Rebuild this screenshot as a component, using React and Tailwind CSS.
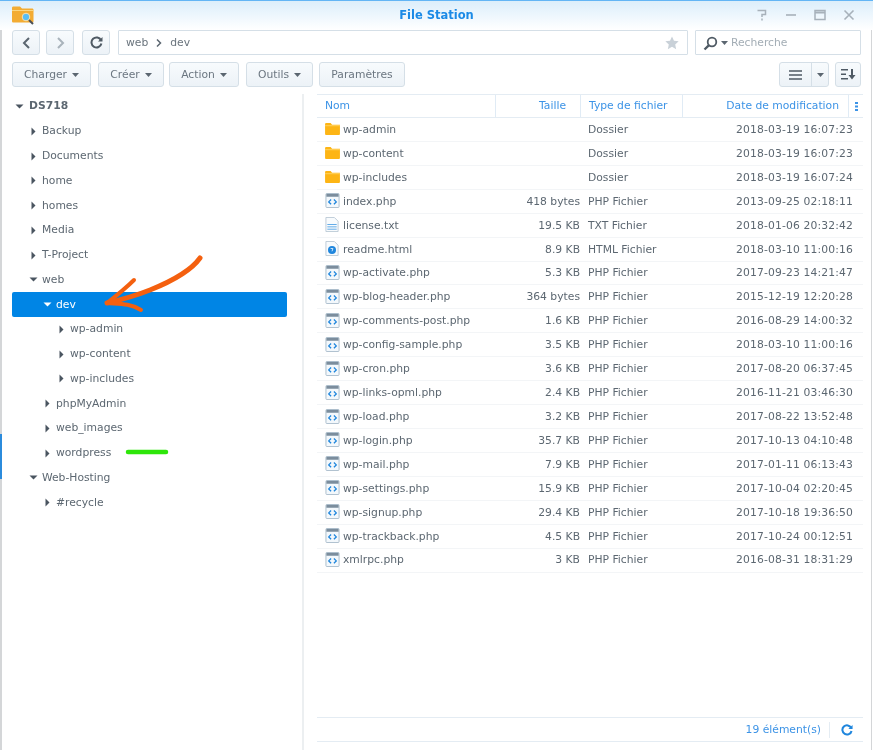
import React from "react";

const tree = [
  { t: "Backup", d: 1, o: 0 }, { t: "Documents", d: 1, o: 0 }, { t: "home", d: 1, o: 0 }, { t: "homes", d: 1, o: 0 },
  { t: "Media", d: 1, o: 0 }, { t: "T-Project", d: 1, o: 0 }, { t: "web", d: 1, o: 1 }, { t: "dev", d: 2, o: 1, sel: 1 },
  { t: "wp-admin", d: 3, o: 0 }, { t: "wp-content", d: 3, o: 0 }, { t: "wp-includes", d: 3, o: 0 },
  { t: "phpMyAdmin", d: 2, o: 0 }, { t: "web_images", d: 2, o: 0 }, { t: "wordpress", d: 2, o: 0 },
  { t: "Web-Hosting", d: 1, o: 1 }, { t: "#recycle", d: 2, o: 0 },
];

const files = [
  ["wp-admin", "", "Dossier", "2018-03-19 16:07:23", "f"],
  ["wp-content", "", "Dossier", "2018-03-19 16:07:23", "f"],
  ["wp-includes", "", "Dossier", "2018-03-19 16:07:24", "f"],
  ["index.php", "418 bytes", "PHP Fichier", "2013-09-25 02:18:11", "p"],
  ["license.txt", "19.5 KB", "TXT Fichier", "2018-01-06 20:32:42", "t"],
  ["readme.html", "8.9 KB", "HTML Fichier", "2018-03-10 11:00:16", "h"],
  ["wp-activate.php", "5.3 KB", "PHP Fichier", "2017-09-23 14:21:47", "p"],
  ["wp-blog-header.php", "364 bytes", "PHP Fichier", "2015-12-19 12:20:28", "p"],
  ["wp-comments-post.php", "1.6 KB", "PHP Fichier", "2016-08-29 14:00:32", "p"],
  ["wp-config-sample.php", "3.5 KB", "PHP Fichier", "2018-03-10 11:00:16", "p"],
  ["wp-cron.php", "3.6 KB", "PHP Fichier", "2017-08-20 06:37:45", "p"],
  ["wp-links-opml.php", "2.4 KB", "PHP Fichier", "2016-11-21 03:46:30", "p"],
  ["wp-load.php", "3.2 KB", "PHP Fichier", "2017-08-22 13:52:48", "p"],
  ["wp-login.php", "35.7 KB", "PHP Fichier", "2017-10-13 04:10:48", "p"],
  ["wp-mail.php", "7.9 KB", "PHP Fichier", "2017-01-11 06:13:43", "p"],
  ["wp-settings.php", "15.9 KB", "PHP Fichier", "2017-10-04 02:20:45", "p"],
  ["wp-signup.php", "29.4 KB", "PHP Fichier", "2017-10-18 19:36:50", "p"],
  ["wp-trackback.php", "4.5 KB", "PHP Fichier", "2017-10-24 00:12:51", "p"],
  ["xmlrpc.php", "3 KB", "PHP Fichier", "2016-08-31 18:31:29", "p"],
];

const Caret = ({ open, color = "#4a5560" }) => (
  <svg width="9" height="9" viewBox="0 0 9 9" className="shrink-0">
    {open ? <path d="M0.5 2.5H8.5L4.5 6.5Z" fill={color} /> : <path d="M2.5 0.5V8.5L6.5 4.5Z" fill={color} />}
  </svg>
);

const Down = () => (
  <svg width="7" height="4" viewBox="0 0 7 4" className="shrink-0"><path d="M0 0H7L3.5 4Z" fill="#5b6670" /></svg>
);

const FileIcon = ({ k }) => {
  if (k === "f")
    return (
      <svg width="15" height="13" viewBox="0 0 16 14" className="shrink-0">
        <path d="M0 2.5C0 1.5 .5 1 1.5 1H6L7.5 3H16V13C16 13.6 15.6 14 15 14H1C.4 14 0 13.6 0 13Z" fill="#fdb515" />
        <path d="M0 4H16" stroke="#ffd466" strokeWidth="1" />
      </svg>
    );
  if (k === "p")
    return (
      <svg width="15" height="15" viewBox="0 0 15 16" className="shrink-0">
        <rect x=".5" y=".5" width="14" height="15" rx="1" fill="#f3f8fc" stroke="#a9bccb" />
        <rect x="1" y="1" width="13" height="3" fill="#7b8d9d" />
        <path d="M6 7L3.5 9.5L6 12M9 7L11.5 9.5L9 12" fill="none" stroke="#1f86dd" strokeWidth="1.4" />
      </svg>
    );
  if (k === "t")
    return (
      <svg width="14" height="15" viewBox="0 0 14 16" className="shrink-0">
        <path d="M.5.5H9.5L13.5 4.5V15.5H.5Z" fill="#f8fbfd" stroke="#bccbd6" />
        <path d="M2 8H12M2 10.5H12M2 13H12" stroke="#5aa6e6" strokeWidth="1" />
      </svg>
    );
  return (
    <svg width="14" height="15" viewBox="0 0 14 16" className="shrink-0">
      <path d="M.5.5H9.5L13.5 4.5V15.5H.5Z" fill="#f8fbfd" stroke="#bccbd6" />
      <circle cx="7" cy="9.5" r="4.3" fill="#1f86dd" />
      <path d="M5.5 8H8L7 11" stroke="#d5ebfb" strokeWidth="1" fill="none" />
    </svg>
  );
};

const btn = "flex items-center justify-center rounded-[3px] border border-[#d5dfe7] bg-gradient-to-b from-[#f8fbfd] to-[#ecf2f7]";

const TextBtn = ({ label, w, caret = true }) => (
  <div className={`${btn} h-[25px] gap-[5px] pt-[1px] text-[#6b7680] ${w}`}>
    <span>{label}</span>
    {caret && <Down />}
  </div>
);

export default function App() {
  return (
    <div className="relative w-[873px] h-[750px] bg-white overflow-hidden text-[10.75px] text-[#5c6771] blur-[0.35px]" style={{ fontFamily: '"DejaVu Sans", sans-serif' }}>
      <div className="absolute left-0 top-0 bottom-0 w-[2px] bg-[#d4d6d8]" />
      <div className="absolute left-0 top-[434px] h-[45px] w-[2px] bg-[#2b8bdc]" />
      <div className="absolute right-[1px] top-0 bottom-0 w-[1px] bg-[#d4d6d8]" />

      {/* title bar */}
      <div className="relative h-[30px] border-t border-[#63b5f5] bg-gradient-to-b from-[#dceefb] to-white flex items-center justify-center">
        <span className="font-bold text-[#1b8ae6] text-[11.5px]">File Station</span>
        <svg className="absolute left-[12px] top-[5px]" width="22" height="19" viewBox="0 0 22 19">
          <path d="M0 2C0 1 .5.5 1.5.5H8L10 2.5H20C21 2.5 21.5 3 21.5 4V15C21.5 16 21 16.5 20 16.5H1.5C.5 16.5 0 16 0 15Z" fill="#f3ac33" />
          <path d="M0 4.5H21.5" stroke="#fbd680" strokeWidth="1" />
          <circle cx="14" cy="11" r="3.8" fill="#57bdf5" stroke="#f6e2b0" strokeWidth="1" />
          <path d="M17 14L21 18" stroke="#4a4f55" strokeWidth="2" />
        </svg>
        <div className="absolute right-[18px] top-[8px] flex items-center gap-[17px]">
          <svg width="12" height="12" viewBox="0 0 12 12" fill="none" stroke="#a7b1ba" strokeWidth="1.5"><path d="M1.5 1.5H9.5V5.5H6V8M6 9.5V11.5" /></svg>
          <svg width="12" height="12" viewBox="0 0 12 12" fill="none" stroke="#a7b1ba" strokeWidth="1.6"><path d="M1 6H11" /></svg>
          <svg width="12" height="12" viewBox="0 0 12 12" fill="none" stroke="#a7b1ba" strokeWidth="1.5"><rect x="1" y="1.5" width="10" height="9" /><path d="M1 3.5H11" strokeWidth="2" /></svg>
          <svg width="12" height="12" viewBox="0 0 12 12" fill="none" stroke="#a7b1ba" strokeWidth="1.6"><path d="M1.5 1.5L10.5 10.5M10.5 1.5L1.5 10.5" /></svg>
        </div>
      </div>

      {/* nav row */}
      <div className="flex h-[25px] pl-[12px] pr-[12px]">
        <div className={`${btn} w-[28px] h-[25px]`}>
          <svg width="9" height="12" viewBox="0 0 9 12" fill="none" stroke="#5b6670" strokeWidth="2"><path d="M7 1L2 6L7 11" /></svg>
        </div>
        <div className={`${btn} w-[28px] h-[25px] ml-[6px]`}>
          <svg width="9" height="12" viewBox="0 0 9 12" fill="none" stroke="#a9b3bb" strokeWidth="2"><path d="M2 1L7 6L2 11" /></svg>
        </div>
        <div className={`${btn} w-[28px] h-[25px] ml-[8px]`}>
          <svg width="13" height="13" viewBox="0 0 13 13" fill="none" stroke="#4f5a64" strokeWidth="2"><path d="M11 4.2A5 5 0 1 0 11.4 7.5" /><path d="M12.5 1V5.5H8Z" fill="#4f5a64" stroke="none" /></svg>
        </div>
        <div className="ml-[8px] w-[570px] h-[25px] border border-[#d5dfe7] rounded-[1px] flex items-center pt-[1px] pl-[7px] pr-[8px] text-[#6a747d]">
          <span>web</span>
          <svg className="mx-[8px]" width="6" height="8" viewBox="0 0 6 8" fill="none" stroke="#5b6670" strokeWidth="1.5"><path d="M1 .5L4.5 4L1 7.5" /></svg>
          <span>dev</span>
          <svg className="ml-auto" width="14" height="14" viewBox="0 0 24 24"><path d="M12 1L15.4 8.3L23.4 9.2L17.5 14.6L19.1 22.5L12 18.5L4.9 22.5L6.5 14.6L.6 9.2L8.6 8.3Z" fill="#c9d1d8" /></svg>
        </div>
        <div className="ml-[7px] w-[166px] h-[25px] border border-[#d5dfe7] rounded-[1px] flex items-center pt-[1px] pl-[7px] gap-[3px]">
          <svg width="15" height="15" viewBox="0 0 15 15" fill="none" stroke="#4f5a64"><circle cx="9" cy="6" r="4.3" strokeWidth="1.8" /><path d="M6 9.2L1.5 13.5" strokeWidth="2.4" /></svg>
          <Down />
          <span className="text-[#a3adb5]">Recherche</span>
        </div>
      </div>

      {/* action row */}
      <div className="flex h-[25px] mt-[7px] pl-[12px]">
        <TextBtn label="Charger" w="w-[79px]" />
        <div className="ml-[7px]"><TextBtn label="Créer" w="w-[66px]" /></div>
        <div className="ml-[5px]"><TextBtn label="Action" w="w-[70px]" /></div>
        <div className="ml-[7px]"><TextBtn label="Outils" w="w-[67px]" /></div>
        <div className="ml-[6px]"><TextBtn label="Paramètres" w="w-[86px]" caret={false} /></div>
        <div className={`${btn} ml-[374px] w-[50px] h-[25px] !justify-start`}>
          <div className="w-[32px] h-full flex items-center justify-center border-r border-[#d5dfe7]">
            <svg width="13" height="10" viewBox="0 0 13 10" stroke="#4f5a64" strokeWidth="1.6"><path d="M0 1H13M0 5H13M0 9H13" /></svg>
          </div>
          <div className="flex-1 flex items-center justify-center"><Down /></div>
        </div>
        <div className={`${btn} ml-[6px] w-[26px] h-[25px]`}>
          <svg width="15" height="11" viewBox="0 0 15 11" fill="#4f5a64"><path d="M0 0H7V1.6H0ZM0 4.5H5V6.1H0ZM0 9H7V10.6H0Z" /><path d="M10 0H12V6H14.5L11 10.6L7.5 6H10Z" /></svg>
        </div>
      </div>

      {/* main */}
      <div className="flex mt-[7px] h-[656px]">
        <div className="w-[304px] h-full border-r-2 border-[#eceff1] shrink-0 pl-[12px] pr-[15px]">
          <div className="h-[25px] flex items-center pl-[3px] pb-[1px] gap-[5px]">
            <Caret open />
            <span className="font-bold text-[#5c6771]">DS718</span>
          </div>
          {tree.map((n) => (
            <div
              key={n.t}
              className={`h-[24.75px] flex items-center gap-[4px] rounded-[2px] ${n.sel ? "bg-[#0085e5] text-white" : ""} ${n.d === 1 ? "pl-[17px]" : n.d === 2 ? "pl-[31px]" : "pl-[45px]"}`}
            >
              <Caret open={!!n.o} color={n.sel ? "#ffffff" : "#4a5560"} />
              <span>{n.t}</span>
            </div>
          ))}
        </div>

        <div className="flex-1 ml-[13px] mr-[10px] flex flex-col">
          <div className="h-[24px] flex items-center border-y border-[#e4ecf3] text-[#3c93e6] shrink-0">
            <div className="w-[178px] pl-[8px]">Nom</div>
            <div className="w-[85px] h-full flex items-center justify-end pr-[14px] border-l border-[#e0ebf5]">Taille</div>
            <div className="w-[102px] h-full flex items-center pl-[8px] border-l border-[#e0ebf5]">Type de fichier</div>
            <div className="w-[166px] h-full flex items-center justify-end pr-[9px] border-l border-[#e0ebf5]">Date de modification</div>
            <div className="flex-1 h-full flex items-center pl-[6px] border-l border-[#e0ebf5]">
              <svg width="3" height="9" viewBox="0 0 3 9" fill="#3c93e6"><path d="M0 0H3V2H0ZM0 3.5H3V5.5H0ZM0 7H3V9H0Z" /></svg>
            </div>
          </div>
          <div className="flex-1">
            {files.map((f) => (
              <div key={f[0]} className="h-[23.93px] flex items-center pt-[1px] border-b border-[#f3f5f7]">
                <div className="w-[178px] pl-[8px] flex items-center">
                  <span className="w-[18px] flex items-center -mt-[2px]"><FileIcon k={f[4]} /></span>
                  <span>{f[0]}</span>
                </div>
                <div className="w-[85px] text-right">{f[1]}</div>
                <div className="w-[102px] pl-[8px]">{f[2]}</div>
                <div className="w-[171px] text-right tracking-[0.15px]">{f[3]}</div>
              </div>
            ))}
          </div>
          <div className="h-[25px] mb-[8px] border-y border-[#e4ecf3] flex items-center justify-end pt-[1px] shrink-0">
            <span className="text-[#3c93e6] pt-[1px]">19 élément(s)</span>
            <div className="w-[1px] h-[16px] bg-[#e4ecf3] ml-[8px]" />
            <svg className="ml-[11px] mr-[10px]" width="12" height="12" viewBox="0 0 13 13" fill="none" stroke="#1f86dd" strokeWidth="2.2"><path d="M11 4.2A5 5 0 1 0 11.4 7.5" /><path d="M12.5 1V5.5H8Z" fill="#1f86dd" stroke="none" /></svg>
          </div>
        </div>
      </div>

      {/* annotations drawn on top of the screenshot */}
      <svg className="absolute left-0 top-0 pointer-events-none" width="873" height="750" fill="none" strokeLinecap="round" strokeLinejoin="round">
        <path d="M200 258C190 272 170 282 150 290C135 296 120 300 107 303" stroke="#f4600f" strokeWidth="5" />
        <path d="M134 280C126 288 116 296 107 303C118 304 130 303 141 310" stroke="#f4600f" strokeWidth="4" />
        <path d="M128 452H166" stroke="#2ee60a" strokeWidth="4.5" />
      </svg>
    </div>
  );
}
